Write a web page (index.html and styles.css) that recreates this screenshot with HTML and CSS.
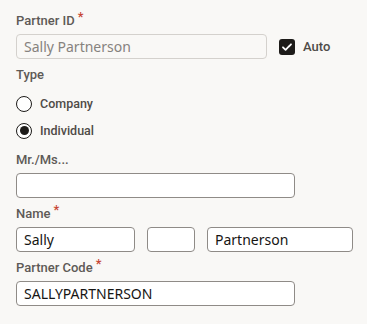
FILE: index.html
```html
<!DOCTYPE html>
<html lang="en">
<head>
  <meta charset="UTF-8" />
  <title>Partner</title>
  <link rel="stylesheet" href="styles.css">
</head>
<body>
  <form class="partner-form">
    <div class="field">
      <label class="label">Partner ID<span class="req">*</span></label>
      <div class="row">
        <input class="input input-id" type="text" value="Sally Partnerson" readonly>
        <label class="check">
          <span class="check-box">
            <svg width="12" height="12" viewBox="0 0 12 12"><path d="M2 6.3l2.6 2.5L10 3.3" fill="none" stroke="#fff" stroke-width="1.8" stroke-linecap="round" stroke-linejoin="round"/></svg>
          </span>
          Auto
        </label>
      </div>
    </div>

    <div class="field">
      <label class="label">Type</label>
      <div class="radios">
        <label class="radio"><span class="radio-dot"></span>Company</label>
        <label class="radio"><span class="radio-dot checked"></span>Individual</label>
      </div>
    </div>

    <div class="field">
      <label class="label">Mr./Ms...</label>
      <input class="input input-title" type="text">
    </div>

    <div class="field">
      <label class="label">Name<span class="req">*</span></label>
      <div class="row name-row">
        <input class="input input-first" type="text" value="Sally">
        <input class="input input-middle" type="text">
        <input class="input input-last" type="text" value="Partnerson">
      </div>
    </div>

    <div class="field">
      <label class="label">Partner Code<span class="req">*</span></label>
      <input class="input input-code" type="text" value="SALLYPARTNERSON">
    </div>
  </form>
</body>
</html>
```

FILE: styles.css
```css
* { box-sizing: border-box; margin: 0; padding: 0; }
body {
  background: #f9f8f6;
  font-family: Roboto, "Noto Sans", sans-serif;
  color: #161513;
}
.partner-form {
  padding: 12px 16px 0;
}
.field { margin-bottom: 7px; }
.label {
  display: block;
  font-size: 13px;
  font-weight: 500;
  line-height: 17px;
  color: #5e5a56;
  margin-bottom: 5px;
}
.req {
  color: #c74634;
  font-size: 13px;
  margin-left: 3px;
  vertical-align: 4px;
  line-height: 0;
}
.row {
  display: flex;
  align-items: center;
}
.input {
  display: block;
  height: 25px;
  border: 1px solid #8f8b87;
  border-radius: 4px;
  background: #fff;
  padding: 0 7px;
  font-family: "Noto Sans", sans-serif;
  font-size: 14px;
  color: #161513;
  outline: none;
}
.input-id {
  width: 251px;
  background: #f9f8f6;
  border-color: #d4d1cd;
  color: #86827e;
}
.check {
  display: flex;
  align-items: center;
  gap: 8px;
  margin-left: 12px;
  font-size: 13px;
  font-weight: 500;
  color: #4f4b47;
}
.check-box {
  width: 16px;
  height: 16px;
  border-radius: 3px;
  background: #1d1b19;
  display: flex;
  align-items: center;
  justify-content: center;
}
.radios {
  display: flex;
  flex-direction: column;
  margin-top: 7px;
  margin-bottom: 6px;
}
.radio {
  display: flex;
  align-items: center;
  height: 27px;
  gap: 8px;
  font-size: 12.5px;
  font-weight: 500;
  color: #4f4b47;
}
.radio-dot {
  width: 16px;
  height: 16px;
  border-radius: 50%;
  border: 1.5px solid #1d1b19;
  background: #fff;
  flex-shrink: 0;
  display: flex;
  align-items: center;
  justify-content: center;
}
.radio-dot.checked::after {
  content: "";
  width: 9px;
  height: 9px;
  border-radius: 50%;
  background: #1d1b19;
}
.input-title,
.input-code { width: 279px; }
.name-row { gap: 12px; }
.input-first { width: 119px; }
.input-middle { width: 48px; }
.input-last { width: 146px; }
```
